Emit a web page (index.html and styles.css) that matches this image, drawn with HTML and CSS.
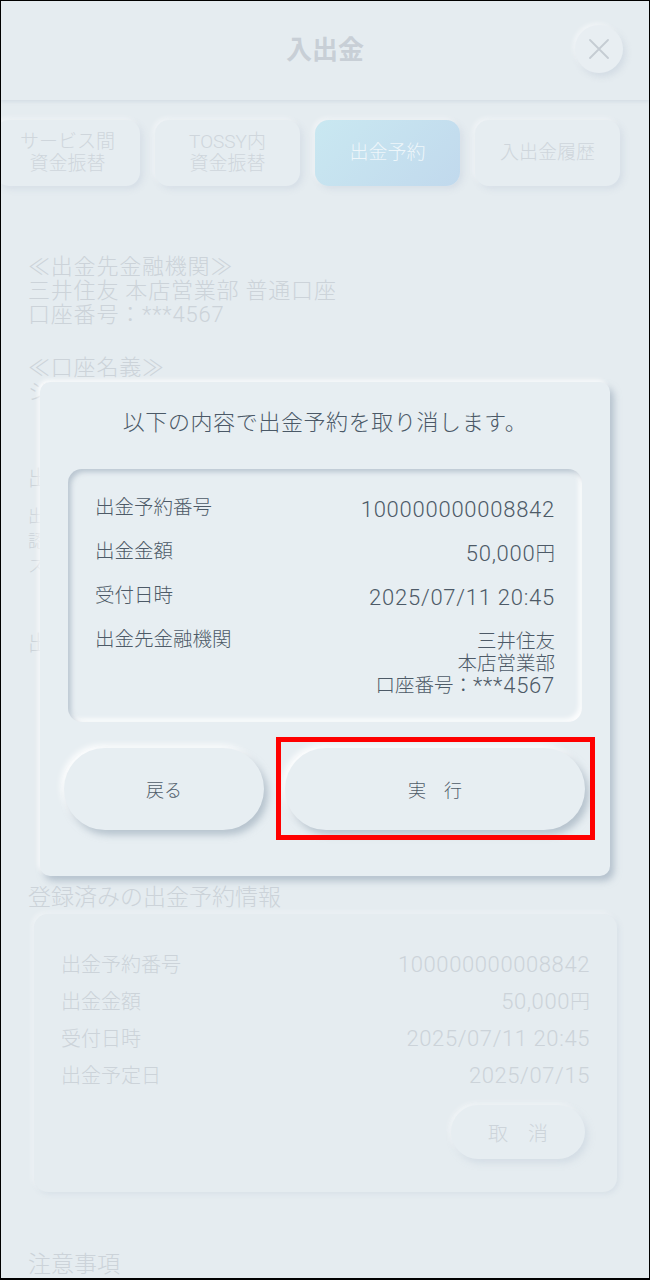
FILE: index.html
```html
<!DOCTYPE html>
<html lang="ja">
<head>
    <meta charset="UTF-8">
    <meta name="viewport" content="width=device-width, initial-scale=1.0">
    <title>入出金</title>
    <link rel="stylesheet" href="styles.css">
</head>
<body>
    <div class="screen">
        <header class="topbar">
            <h1>入出金</h1>
            <button class="close-btn" aria-label="閉じる">
                <svg width="20" height="20" viewBox="0 0 20 20"><path d="M1 1 L19 19 M19 1 L1 19" stroke="currentColor" stroke-width="1.8" fill="none" stroke-linecap="round"/></svg>
            </button>
        </header>

        <nav class="tabs">
            <div class="tab">サービス間<br>資金振替</div>
            <div class="tab">TOSSY内<br>資金振替</div>
            <div class="tab active">出金予約</div>
            <div class="tab">入出金履歴</div>
        </nav>

        <main class="content">
            <section class="info">
                <p>≪出金先金融機関≫</p>
                <p>三井住友 本店営業部 普通口座</p>
                <p>口座番号：***4567</p>
            </section>
            <section class="info">
                <p>≪口座名義≫</p>
                <p>ジ*** ***</p>
            </section>

            <section class="form-area">
                <p class="form-label">出金日</p>
                <p class="note">出金日</p>
                <p class="note">認証</p>
                <p class="note">スケ</p>
                <p class="form-label lower">出金額</p>
            </section>

            <h3 class="sec-title">登録済みの出金予約情報</h3>
            <div class="reserve-card">
                <div class="reserve-row"><span>出金予約番号</span><span class="num">100000000008842</span></div>
                <div class="reserve-row"><span>出金金額</span><span class="num">50,000<span class="ja">円</span></span></div>
                <div class="reserve-row"><span>受付日時</span><span class="num">2025/07/11 20:45</span></div>
                <div class="reserve-row"><span>出金予定日</span><span class="num">2025/07/15</span></div>
                <button class="cancel-btn">取　消</button>
            </div>

            <h3 class="sec-title notes">注意事項</h3>
        </main>

        <div class="overlay">
            <div class="modal">
                <p class="modal-title">以下の内容で出金予約を取り消します。</p>
                <div class="detail-card">
                    <div class="detail-row">
                        <span class="label">出金予約番号</span>
                        <span class="value">100000000008842</span>
                    </div>
                    <div class="detail-row">
                        <span class="label">出金金額</span>
                        <span class="value">50,000<span class="ja">円</span></span>
                    </div>
                    <div class="detail-row">
                        <span class="label">受付日時</span>
                        <span class="value">2025/07/11 20:45</span>
                    </div>
                    <div class="detail-row">
                        <span class="label">出金先金融機関</span>
                        <span class="value"><span class="ja">三井住友<br>本店営業部<br>口座番号：</span>***4567</span>
                    </div>
                </div>
                <div class="modal-actions">
                    <button class="pill back">戻る</button>
                    <div class="exec-wrap">
                        <button class="pill exec">実　行</button>
                        <div class="highlight"></div>
                    </div>
                </div>
            </div>
        </div>
    </div>
</body>
</html>
```

FILE: styles.css
```css
body {
    margin: 0;
    font-family: Roboto, "Noto Sans CJK JP", sans-serif;
    font-weight: 300;
}
p, h1, h3 {
    margin: 0;
    font-weight: 300;
}
button {
    font-family: inherit;
    font-weight: 300;
    border: none;
    cursor: pointer;
}
.screen {
    position: relative;
    width: 650px;
    height: 1280px;
    box-sizing: border-box;
    border: 1px solid #000;
    border-bottom-width: 2px;
    background: #e5ecf0;
    overflow: hidden;
    color: #ccd3d9;
}

/* header */
.topbar {
    height: 99px;
    display: flex;
    align-items: center;
    justify-content: center;
    position: relative;
    box-shadow: 0 2px 3px rgba(185, 198, 212, 0.35);
}
.topbar h1 {
    font-size: 26px;
    font-weight: bold;
    color: #c8cfd6;
    margin-top: -6px;
}
.close-btn {
    position: absolute;
    right: 26px;
    top: 24px;
    width: 48px;
    height: 48px;
    border-radius: 50%;
    background: #e8eef2;
    color: #c5ccd3;
    display: flex;
    align-items: center;
    justify-content: center;
    box-shadow: 3px 4px 6px rgba(190, 202, 215, 0.45), -2px -2px 4px rgba(255, 255, 255, 0.5);
}

/* tabs */
.tabs {
    display: flex;
    gap: 15px;
    margin: 20px 0 0 -6px;
}
.tab {
    flex: 0 0 145px;
    height: 66px;
    border-radius: 14px;
    display: flex;
    align-items: center;
    justify-content: center;
    text-align: center;
    font-size: 19px;
    line-height: 22px;
    color: #cfd6dc;
    background: #e6edf1;
    box-shadow: 3px 3px 6px rgba(195, 207, 219, 0.45), -2px -2px 5px rgba(255, 255, 255, 0.5);
}
.tab.active {
    background: linear-gradient(135deg, #c9e8f1, #c1d9ed);
    color: #eef6fa;
}

/* background page */
.content {
    padding: 69px 27px 0;
}
.info {
    font-size: 22px;
    line-height: 24px;
    letter-spacing: 0.8px;
    margin-bottom: 29px;
}
.form-area {
    margin-top: 62px;
}
.form-label {
    font-size: 21px;
    line-height: 24px;
    margin-bottom: 14px;
}
.form-label.lower {
    margin-top: 52px;
}
.note {
    font-size: 17px;
    line-height: 25px;
}
.sec-title {
    font-size: 23px;
    line-height: 24px;
    margin-top: 231px;
}
.sec-title.notes {
    margin-top: 61px;
}
.reserve-card {
    margin: 4px 5px 0 6px;
    padding: 36px 27px 33px;
    border-radius: 14px;
    display: flex;
    flex-direction: column;
    gap: 7px;
    box-shadow: 2px 2px 5px rgba(200, 211, 222, 0.45), -2px -2px 5px rgba(255, 255, 255, 0.45);
}
.reserve-row {
    display: flex;
    justify-content: space-between;
    font-size: 20px;
    line-height: 30px;
}
.num {
    font-size: 22px;
    letter-spacing: 0.6px;
}
.num .ja {
    font-size: 20px;
    letter-spacing: 0;
    vertical-align: top;
}
.cancel-btn {
    align-self: flex-end;
    margin: 7px 5px 0 0;
    width: 134px;
    height: 54px;
    border-radius: 27px;
    background: #e6edf1;
    color: #cdd4da;
    font-size: 20px;
    box-shadow: 3px 4px 6px rgba(195, 207, 219, 0.5), -2px -2px 5px rgba(255, 255, 255, 0.5);
}

/* modal */
.overlay {
    position: absolute;
    inset: 0;
    display: flex;
    justify-content: center;
    align-items: flex-start;
    padding-top: 381px;
}
.modal {
    width: 570px;
    box-sizing: border-box;
    padding: 28px 28px 46px;
    background: #e7eef2;
    border-radius: 10px;
    box-shadow: 4px 5px 7px rgba(140, 158, 176, 0.55), -2px -2px 4px rgba(255, 255, 255, 0.9);
}
.modal-title {
    text-align: center;
    font-size: 22px;
    line-height: 26px;
    letter-spacing: 0.6px;
    color: #4b5967;
}
.detail-card {
    margin-top: 33px;
    padding: 27px 27px 25px;
    border-radius: 14px;
    display: flex;
    flex-direction: column;
    gap: 19px;
    box-shadow: inset 3px 3px 5px rgba(150, 166, 182, 0.55), inset -3px -3px 5px rgba(255, 255, 255, 0.95);
}
.detail-row {
    display: flex;
    justify-content: space-between;
    align-items: flex-start;
    color: #4d5a67;
}
.label {
    font-size: 19.5px;
    line-height: 24px;
}
.value {
    font-size: 22px;
    line-height: 22px;
    letter-spacing: 0.75px;
    padding-top: 3px;
    text-align: right;
}
.value .ja {
    font-size: 19.5px;
    letter-spacing: 0;
    vertical-align: top;
}
.modal-actions {
    display: flex;
    gap: 21px;
    margin: 26px -3px 0 -4px;
}
.pill {
    height: 82px;
    border-radius: 41px;
    background: #e7eef2;
    color: #4f5c69;
    font-size: 18px;
    box-shadow: 4px 5px 7px rgba(150, 166, 182, 0.6), -3px -3px 6px rgba(255, 255, 255, 0.95);
}
.back {
    flex: 0 0 200px;
}
.exec-wrap {
    flex: 1;
    position: relative;
    display: flex;
}
.exec {
    flex: 1;
}
.highlight {
    position: absolute;
    top: -11px;
    right: -10px;
    bottom: -10px;
    left: -9px;
    border: 5px solid #ff0000;
}
```
